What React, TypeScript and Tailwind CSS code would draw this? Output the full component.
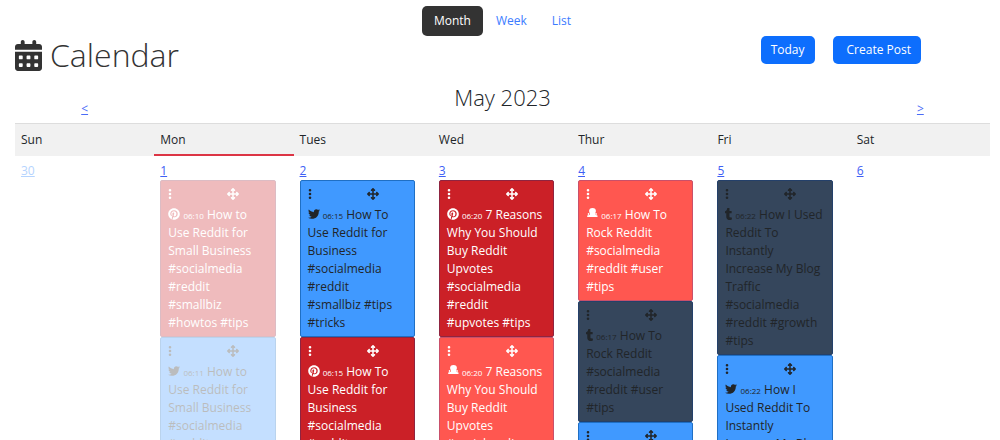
import {
  FaArrowsUpDownLeftRight,
  FaCalendarDays,
  FaEllipsisVertical,
  FaPinterest,
  FaTumblr,
  FaTwitter,
} from 'react-icons/fa6';

type Network = 'pinterest' | 'twitter' | 'tumblr' | 'reddit';

interface Post {
  network: Network;
  time: string;
  text: string;
}

interface Day {
  name: string;
  date: number;
  today?: boolean;
  outside?: boolean;
  past?: boolean;
  posts: Post[];
}

const SMALL_BIZ = 'How to Use Reddit for Small Business #socialmedia #reddit #smallbiz #howtos #tips';
const BUSINESS = 'How To Use Reddit for Business #socialmedia #reddit #smallbiz #tips #tricks';
const UPVOTES = '7 Reasons Why You Should Buy Reddit Upvotes #socialmedia #reddit #upvotes\u00a0#tips';
const ROCK = 'How To Rock Reddit #socialmedia #reddit #user #tips';
const TRAFFIC = 'How I Used Reddit To Instantly Increase My Blog Traffic #socialmedia #reddit #growth #tips';

const days: Day[] = [
  { name: 'Sun', date: 30, outside: true, posts: [] },
  {
    name: 'Mon',
    date: 1,
    today: true,
    past: true,
    posts: [
      { network: 'pinterest', time: '06:10', text: SMALL_BIZ },
      { network: 'twitter', time: '06:11', text: SMALL_BIZ },
    ],
  },
  {
    name: 'Tues',
    date: 2,
    posts: [
      { network: 'twitter', time: '06:15', text: BUSINESS },
      { network: 'pinterest', time: '06:15', text: BUSINESS },
    ],
  },
  {
    name: 'Wed',
    date: 3,
    posts: [
      { network: 'pinterest', time: '06:20', text: UPVOTES },
      { network: 'reddit', time: '06:20', text: UPVOTES },
    ],
  },
  {
    name: 'Thur',
    date: 4,
    posts: [
      { network: 'reddit', time: '06:17', text: ROCK },
      { network: 'tumblr', time: '06:17', text: ROCK },
      { network: 'twitter', time: '06:17', text: ROCK },
    ],
  },
  {
    name: 'Fri',
    date: 5,
    posts: [
      { network: 'tumblr', time: '06:22', text: TRAFFIC },
      { network: 'twitter', time: '06:22', text: TRAFFIC },
    ],
  },
  { name: 'Sat', date: 6, posts: [] },
];

const cardColors: Record<Network, string> = {
  pinterest: 'bg-[#cb2027] border-[#8f2440] text-white',
  twitter: 'bg-[#4099ff] border-[#1f6fc4] text-[#212529]',
  tumblr: 'bg-[#35465c] border-[#24406a] text-[#212529]',
  reddit: 'bg-[#ff5750] border-[#c9506a] text-white',
};

function RedditIcon() {
  return (
    <svg viewBox="0 0 12 12" className="inline-block h-3 w-3 align-[-1px]" fill="currentColor">
      <ellipse cx="6.5" cy="3" rx="3.4" ry="3" />
      <path d="M4 4.5h5v2.3l2.500.7v1.500H1.200V7.500L4 6.800z" />
      <circle cx="2.600" cy="6" r=".9" />
      <circle cx="10" cy="6" r=".9" />
    </svg>
  );
}

function NetworkIcon({ network }: { network: Network }) {
  if (network === 'pinterest') return <FaPinterest className="inline-block text-[12px] align-[-1px]" />;
  if (network === 'twitter') return <FaTwitter className="inline-block text-[12px] align-[-1px]" />;
  if (network === 'tumblr') return <FaTumblr className="inline-block h-3 w-[7px] align-[-1px]" preserveAspectRatio="xMidYMid slice" />;
  return <RedditIcon />;
}

function PostCard({ post, faded }: { post: Post; faded?: boolean }) {
  return (
    <article
      className={`rounded-xs border pt-[7px] pr-[9px] pb-1 pl-[7px] leading-[18px] ${cardColors[post.network]} ${
        faded ? 'opacity-30' : ''
      }`}
    >
      <div className="flex h-[18px] items-start text-[12px]">
        <button type="button" aria-label="Post options" className="-ml-1">
          <FaEllipsisVertical />
        </button>
        <button type="button" aria-label="Move post" className="ml-[51px]">
          <FaArrowsUpDownLeftRight />
        </button>
      </div>
      <p>
        <NetworkIcon network={post.network} /> <small className="text-[8px] leading-none">{post.time}</small>{' '}
        {post.text}
      </p>
    </article>
  );
}

export default function App() {
  return (
    <main className="h-screen overflow-hidden bg-white pt-1.5 pr-2.5 pl-[15px] font-['Open_Sans',sans-serif] text-[12px] text-[#212529]">
      <nav className="flex h-[30px] justify-center text-[12px] text-[#3b7cff]">
        <a href="#month" className="flex items-center rounded-[5px] bg-[#333] px-3 font-medium text-white">
          Month
        </a>
        <a href="#week" className="flex items-center px-[13px]">
          Week
        </a>
        <a href="#list" className="flex items-center px-3">
          List
        </a>
      </nav>

      <header className="flex items-start justify-between">
        <h1 className="flex items-center gap-2 text-[32px] leading-[38px] font-light text-[#333]">
          <FaCalendarDays className="h-[31px] w-[27px]" />
          Calendar
        </h1>
        <div className="mr-[69px] flex gap-[18px] font-medium text-white">
          <button type="button" className="h-7 rounded-[5px] bg-[#0d6efd] px-2.5">
            Today
          </button>
          <button type="button" className="h-7 rounded-[5px] bg-[#0d6efd] pr-2.5 pl-[14px]">
            Create Post
          </button>
        </div>
      </header>

      <div className="mt-2 grid h-[41px] grid-cols-7 text-center">
        <a href="#prev" className="pt-[18px] leading-[18px] text-[#4a6cf7] underline">
          &lt;
        </a>
        <h2 className="col-span-5 text-[22px] leading-[30px] font-light">May 2023</h2>
        <a href="#next" className="pt-[18px] leading-[18px] text-[#4a6cf7] underline">
          &gt;
        </a>
      </div>

      <table className="w-full table-fixed border-collapse">
        <thead>
          <tr className="h-8 border-t border-[#ddd] bg-[#f1f1f1] text-left">
            {days.map((day) => (
              <th
                key={day.name}
                scope="col"
                className={`px-1.5 font-normal ${day.today ? 'shadow-[inset_0_-2px_0_#dc3545]' : ''}`}
              >
                {day.name}
              </th>
            ))}
          </tr>
        </thead>
        <tbody>
          <tr>
            {days.map((day) => (
              <td key={day.name} className="pt-1.5 pr-[18px] pl-1.5 align-top">
                <a
                  href={`#day-${day.date}`}
                  className={`block leading-[18px] underline ${day.outside ? 'text-[#b6d4fe]' : 'text-[#3f5ff5]'}`}
                >
                  {day.date}
                </a>
                {day.posts.map((post) => (
                  <PostCard key={post.network} post={post} faded={day.past} />
                ))}
              </td>
            ))}
          </tr>
        </tbody>
      </table>
    </main>
  );
}
